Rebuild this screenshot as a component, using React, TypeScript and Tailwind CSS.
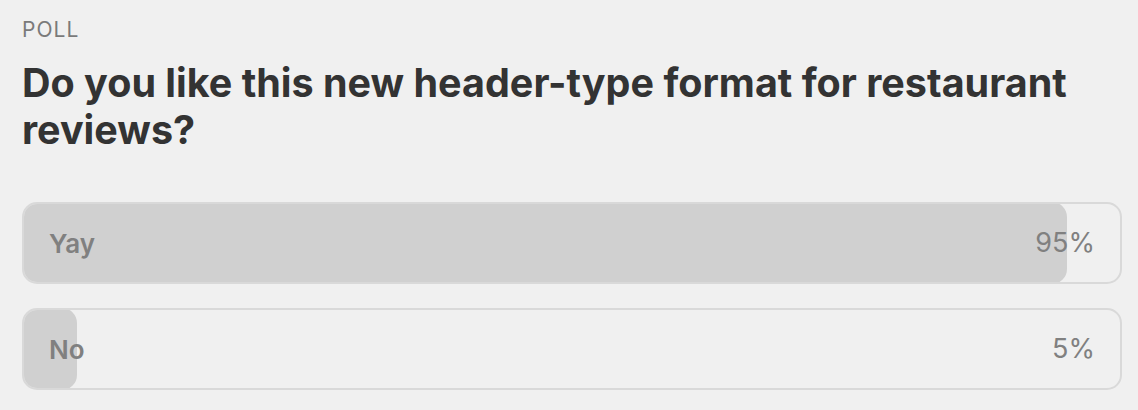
import React from 'react';

const options = [
  { label: 'Yay', pct: 95 },
  { label: 'No', pct: 5 },
];

export default function App() {
  return (
    <div className="w-[1138px] h-[410px] bg-[#f0f0f0] px-[22px] pt-[18px] font-['Inter',sans-serif]">
      <div className="text-[21px] leading-[24px] tracking-[0.05em] text-[#7a7a7a]">POLL</div>
      <h1 className="mt-[18px] text-[39.5px] leading-[47px] font-bold text-[#333333]">
        Do you like this new header-type format for restaurant reviews?
      </h1>
      <div className="mt-[48px] flex flex-col gap-[24px] w-[1100px]">
        {options.map((o) => (
          <div
            key={o.label}
            className="relative h-[82px] rounded-[15px] border-2 border-[#d9d9d9] overflow-hidden"
          >
            <div
              className="absolute left-[-2px] top-[-2px] bottom-[-2px] rounded-[15px] bg-[#d0d0d0]"
              style={{ width: `calc((100% + 4px) * ${o.pct / 100})` }}
            />
            <div className="relative h-full flex items-center justify-between pl-[25px] pr-[25px] text-[#808080]">
              <span className="text-[26px] font-semibold">{o.label}</span>
              <span className="text-[27px]">{o.pct}%</span>
            </div>
          </div>
        ))}
      </div>
    </div>
  );
}
